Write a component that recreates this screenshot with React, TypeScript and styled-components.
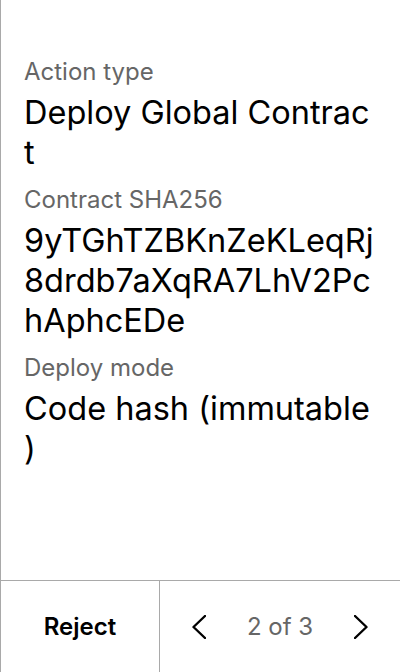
import React from "react";
import styled, { createGlobalStyle } from "styled-components";

const Global = createGlobalStyle`
  html, body { margin: 0; padding: 0; background: #fff; }
  body { font-family: Inter, "Noto Sans", sans-serif; }
  * { box-sizing: border-box; }
`;

const Screen = styled.div`
  width: 400px;
  height: 672px;
  display: flex;
  flex-direction: column;
  border-left: 1px solid #a9a9a9;
  background: #fff;
`;

const Content = styled.main`
  flex: 1;
  display: flex;
  flex-direction: column;
  gap: 12px;
  padding: 57px 24px 0 23px;
`;

const Field = styled.section`
  display: flex;
  flex-direction: column;
  gap: 6px;
`;

const Label = styled.div`
  font-size: 24px;
  line-height: 30px;
  color: #666;
`;

const Value = styled.div`
  font-size: 32.5px;
  line-height: 40px;
  color: #000;
  word-break: break-all;
  line-break: anywhere;
`;

const Footer = styled.footer`
  height: 92px;
  display: grid;
  grid-template-columns: 159px 1fr;
  border-top: 1px solid #a9a9a9;
`;

const RejectButton = styled.button`
  all: unset;
  display: flex;
  align-items: center;
  justify-content: center;
  border-right: 1px solid #a9a9a9;
  font-family: Inter, sans-serif;
  font-weight: 600;
  font-size: 24px;
  color: #000;
`;

const Pager = styled.div`
  display: flex;
  align-items: center;
  justify-content: space-between;
  padding: 0 32px;
`;

const NavButton = styled.button`
  all: unset;
  display: flex;
  align-items: center;
  justify-content: center;
  width: 14px;
  height: 24px;
`;

const PageText = styled.span`
  font-size: 24px;
  color: #666;
`;

const Chevron = ({ dir }: { dir: "left" | "right" }) => (
  <svg width="14" height="24" viewBox="0 0 14 24" fill="none">
    <polyline
      points={dir === "left" ? "13,1 1.5,12 13,23" : "1,1 12.5,12 1,23"}
      stroke="#000"
      strokeWidth="2.4"
      strokeLinecap="round"
      strokeLinejoin="round"
    />
  </svg>
);

const fields = [
  { label: "Action type", value: "Deploy Global Contract" },
  { label: "Contract SHA256", value: "9yTGhTZBKnZeKLeqRj8drdb7aXqRA7LhV2PchAphcEDe" },
  { label: "Deploy mode", value: "Code hash (immutable)" },
];

export default function App() {
  return (
    <>
      <Global />
      <Screen>
        <Content>
          {fields.map((f) => (
            <Field key={f.label}>
              <Label>{f.label}</Label>
              <Value>{f.value}</Value>
            </Field>
          ))}
        </Content>
        <Footer>
          <RejectButton>Reject</RejectButton>
          <Pager>
            <NavButton aria-label="Previous"><Chevron dir="left" /></NavButton>
            <PageText>2 of 3</PageText>
            <NavButton aria-label="Next"><Chevron dir="right" /></NavButton>
          </Pager>
        </Footer>
      </Screen>
    </>
  );
}
